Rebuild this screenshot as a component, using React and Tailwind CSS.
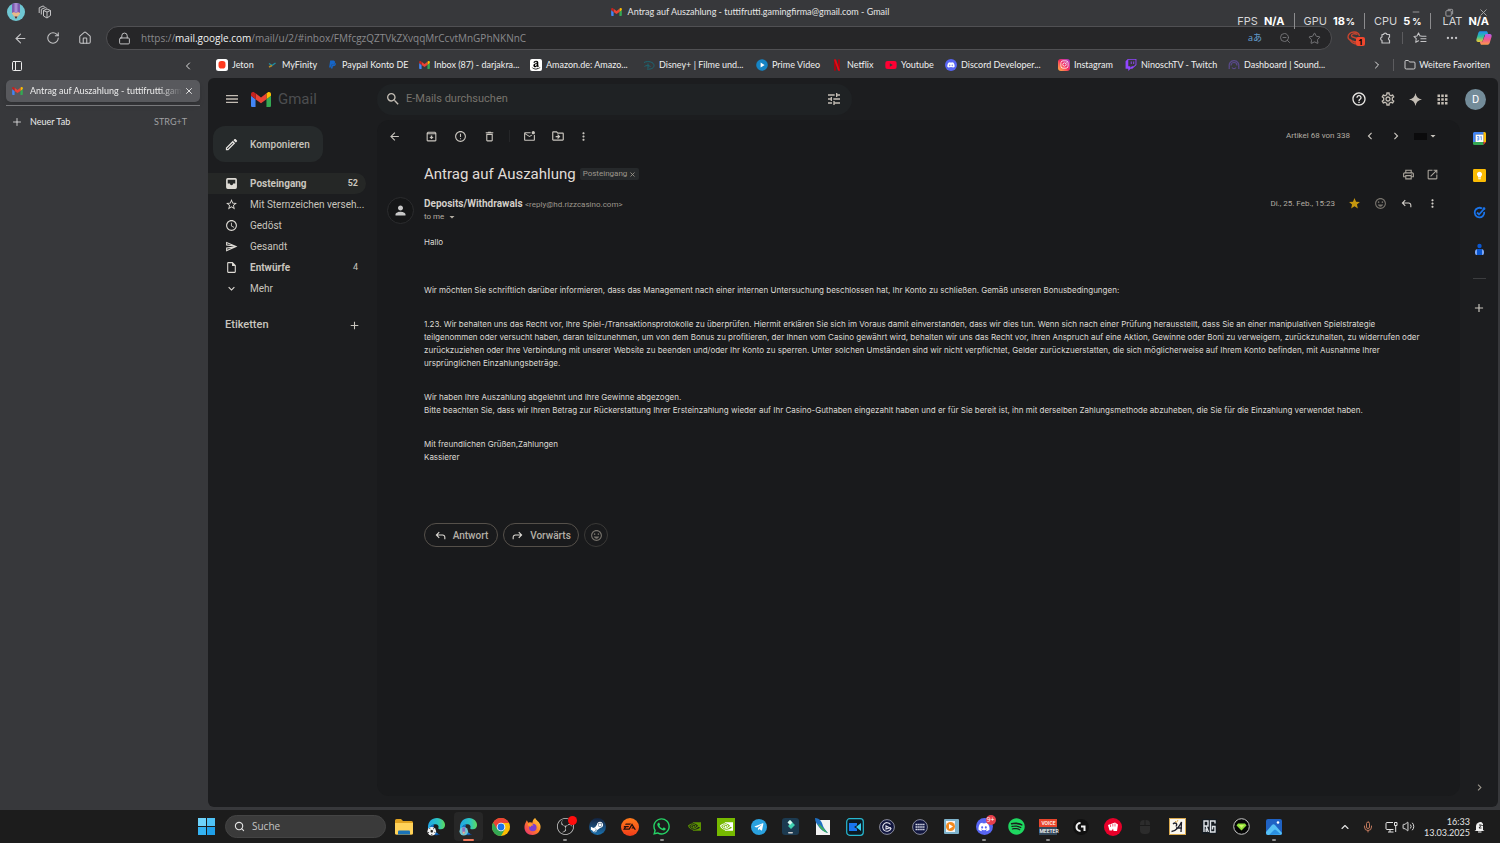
import {
  MdAccessTime, MdAdd, MdApps, MdArrowBack, MdArrowDropDown, MdChevronLeft, MdChevronRight, MdExpandMore,
  MdErrorOutline, MdHelpOutline, MdMenu, MdMoreVert, MdOpenInNew, MdOutlineArchive, MdOutlineDelete,
  MdOutlineDriveFileMove, MdOutlineInsertDriveFile, MdOutlineMarkEmailUnread, MdOutlinePrint, MdOutlineSend,
  MdOutlineSettings, MdPerson, MdSearch, MdStar, MdStarBorder, MdTune, MdOutlineEdit, MdOutlineEmojiEmotions,
} from 'react-icons/md'
import {
  FaAmazon, FaDiscord, FaInstagram, FaPaypal, FaSpotify, FaSteamSymbol, FaTelegramPlane, FaTwitch, FaWhatsapp, FaYoutube,
} from 'react-icons/fa'
import { SiEa, SiNvidia, SiObsstudio } from 'react-icons/si'
import {
  ArrowLeft, ChevronLeft, ChevronRight, ChevronUp, Ellipsis, Folder, House, Lock, Mic, Minus, PanelLeft, Plus,
  RotateCw, Search, Star, Volume2, X, ZoomOut,
} from 'lucide-react'

function GmailLogo({ className }) {
  return (
    <svg viewBox="52 42 88 66" className={className}>
      <path fill="#4285f4" d="M58 108h14V74L52 59v43c0 3.32 2.69 6 6 6" />
      <path fill="#34a853" d="M120 108h14c3.32 0 6-2.69 6-6V59l-20 15" />
      <path fill="#fbbc04" d="M120 48v26l20-15v-8c0-7.42-8.47-11.65-14.4-7.2" />
      <path fill="#ea4335" d="M72 74V48l24 18 24-18v26L96 92" />
      <path fill="#c5221f" d="M52 51v8l20 15V48l-5.6-4.2c-5.94-4.45-14.4-.22-14.4 7.2" />
    </svg>
  )
}

function ReplyIcon({ className }) {
  return (
    <svg viewBox="0 -960 960 960" fill="currentColor" className={className}>
      <path d="M760-200v-160q0-50-35-85t-85-35H273l144 144-57 56-240-240 240-240 57 56-144 144h367q83 0 141.5 58.5T840-360v160h-80Z" />
    </svg>
  )
}

function InboxIcon({ className }) {
  return (
    <svg viewBox="0 0 24 24" fill="currentColor" className={className}>
      <path fillRule="evenodd" d="M5 2h14a3 3 0 0 1 3 3v14a3 3 0 0 1-3 3H5a3 3 0 0 1-3-3V5a3 3 0 0 1 3-3zm0 3v7h4a3 3 0 0 0 6 0h4V5z" />
    </svg>
  )
}

function PuzzleIcon({ className }) {
  return (
    <svg viewBox="0 0 14 14" fill="none" stroke="currentColor" strokeWidth="1.200" strokeLinejoin="round" className={className}>
      <path d="M4 3.500h1.500a1.800 1.800 0 0 1 3.500 0h2.500v2.700a1.600 1.600 0 0 0 0 3V12H4V9.500a1.800 1.800 0 0 1 0-3.500z" />
    </svg>
  )
}

function PencilAvatar({ className }) {
  return (
    <svg viewBox="0 0 18 18" className={className}>
      <circle cx="9" cy="9" r="9" fill="#6fc7d3" />
      <path d="M5 8h8v2.500L9 16l-4-5.500z" fill="#e6b98a" />
      <path d="M5 1q4-2 8 0v9l-2-1-2 1-2-1-2 1z" fill="#7d5bb0" />
      <path d="M7.500 0h3v9L9 10 7.500 9z" fill="#a98bd0" />
      <path d="M7.500 13.500h3L9 16z" fill="#3b2f3f" />
    </svg>
  )
}

function WorkspacesIcon({ className }) {
  return (
    <svg viewBox="0 0 14 14" fill="none" stroke="#c4c4c6" strokeLinejoin="round" className={className}>
      <path d="M5.500 5.500 9 4l3.500 1.500v5L9 13l-3.500-2z" />
      <path d="M5.500 5.500 9 7l3.500-1.500M9 7v5.500M3.300 9.500V4.300L7.200 2.600l1.500.6M1.200 8V2.800L5 1l1.500.6" />
    </svg>
  )
}

function Sparkle({ className }) {
  return (
    <svg viewBox="0 0 24 24" fill="currentColor" className={className}>
      <path d="M12 0c1 7 5 11 12 12-7 1-11 5-12 12C11 17 7 13 0 12 7 11 11 7 12 0z" />
    </svg>
  )
}

function CopilotIcon({ className }) {
  return (
    <svg viewBox="0 0 18 18" className={className}>
      <defs>
        <linearGradient id="cpA" x1="0" y1="0" x2="0" y2="1">
          <stop offset="0" stopColor="#1f8df0" />
          <stop offset=".5" stopColor="#2fc0a0" />
          <stop offset="1" stopColor="#f2cb30" />
        </linearGradient>
        <linearGradient id="cpB" x1="0" y1="0" x2="0" y2="1">
          <stop offset="0" stopColor="#b45cf0" />
          <stop offset=".5" stopColor="#f0568f" />
          <stop offset="1" stopColor="#fb9a4b" />
        </linearGradient>
      </defs>
      <path d="M5 1.500h6.500c1.200 0 1.500.7 1.800 2L14 6H9.500L7.500 12c-.4 1-1 1.500-2 1.500H2.500C.8 13.500 0 12 .5 10.300L2.500 3.600C3 2.200 3.700 1.500 5 1.500z" fill="url(#cpA)" />
      <path d="M13 16.500H6.500c-1.200 0-1.500-.7-1.800-2L4.300 13h3l3-7.500C10.700 4.500 11.500 4.500 12.500 4.500h3c1.700 0 2.500 1.500 2 3.200l-2 6.700c-.5 1.400-1.200 2.100-2.500 2.100z" fill="url(#cpB)" />
    </svg>
  )
}

function JetonIcon() {
  return (
    <svg viewBox="0 0 12 12" className="size-3">
      <rect width="12" height="12" rx="2.500" fill="#fff" />
      <rect x="2.500" y="2" width="7" height="7.500" rx="2.800" fill="#ff3a1f" />
    </svg>
  )
}

function MyFinityIcon() {
  return (
    <svg viewBox="0 0 12 12" fill="none" strokeWidth="1.400" className="size-3">
      <path d="M3 4.500 6 6.500 9.500 4" stroke="#1f8fa3" />
      <path d="M3 8l3-1.500" stroke="#b98b2a" />
    </svg>
  )
}

function DisneyIcon() {
  return (
    <svg viewBox="0 0 12 12" fill="none" stroke="#1c6773" className="size-3">
      <path d="M1 3.500C5 1.500 11 3 11 6.500 11 9.500 7 10.500 4 10M5 4.500v4.500M1.500 7.500C3 6 6 6.500 7.500 7.500" />
    </svg>
  )
}

function PrimeIcon() {
  return (
    <svg viewBox="0 0 12 12" className="size-3">
      <circle cx="6" cy="6" r="5.800" fill="#1684c4" />
      <path d="M4.600 3.500v5l4-2.500z" fill="#fff" />
    </svg>
  )
}

function NetflixIcon() {
  return (
    <svg viewBox="0 0 12 12" className="size-3">
      <path d="M3 .5h2v11l-2 .3zM7 .5h2v11.300L7 11.500z" fill="#a50610" />
      <path d="M3 .5h2l4 11.300-2-.3z" fill="#e50914" />
    </svg>
  )
}

function SoundIcon() {
  return (
    <svg viewBox="0 0 12 12" fill="none" stroke="#5a4a8c" strokeWidth="1.200" className="size-3">
      <path d="M1.500 8a4.800 4.800 0 1 1 9 0M3 6.500a3 3 0 0 1 6 0M1.200 7v3M10.800 7v3" />
      <path d="M4 8.500c1 1.500 3 1.500 4 0" />
    </svg>
  )
}

function FavoritesIcon({ className }) {
  return (
    <svg viewBox="0 0 16 14" fill="none" stroke="#c4c4c6" strokeWidth="1.200" strokeLinecap="round" strokeLinejoin="round" className={className}>
      <path d="M9.500 4.800 8 4.600 6.300 1 4.500 4.700.9 5.200l2.700 2.600L3 12l3.300-1.800M10 5h5M9 8h6M9 11h6" />
    </svg>
  )
}

function RedExtension({ className }) {
  return (
    <svg viewBox="0 0 14 14" fill="none" stroke="#c9452f" strokeWidth="1.300" className={className}>
      <path d="M12.500 5C12 2.500 9.500 1 7 1 3.500 1 1 3.500 1 6c0 2 1.500 3 3.500 3.500L9 12" />
      <path d="M10.500 3.500C8 2 4 3 4.500 5S10 6 10.500 8.500 8 11 6 10M2.500 8c1.500 3 4 5 7 5" />
    </svg>
  )
}

const BOOKMARKS = [
  { name: 'Jeton', width: 'w-[50px]', icon: <JetonIcon /> },
  { name: 'MyFinity', width: 'w-[60px]', icon: <MyFinityIcon /> },
  { name: 'Paypal Konto DE', width: 'w-[92px]', icon: <FaPaypal className="size-[9px] mx-px text-[#1565c8]" /> },
  { name: 'Inbox (87) - darjakra...', width: 'w-[112px]', icon: <GmailLogo className="h-2 w-[11px]" /> },
  {
    name: 'Amazon.de: Amazo...',
    width: 'w-[113px]',
    icon: <span className="size-3 rounded-xs bg-white flex items-center justify-center"><FaAmazon className="size-[10px] text-black" /></span>,
  },
  { name: 'Disney+ | Filme und...', width: 'w-[113px]', icon: <DisneyIcon /> },
  { name: 'Prime Video', width: 'w-[75px]', icon: <PrimeIcon /> },
  { name: 'Netflix', width: 'w-[54px]', icon: <NetflixIcon /> },
  { name: 'Youtube', width: 'w-[60px]', icon: <FaYoutube className="size-3 text-[#ff0033]" /> },
  {
    name: 'Discord Developer...',
    width: 'w-[113px]',
    icon: <span className="size-3 rounded-full bg-[#5865f2] flex items-center justify-center"><FaDiscord className="size-2 text-white" /></span>,
  },
  {
    name: 'Instagram',
    width: 'w-[67px]',
    icon: <span className="size-3 rounded-[3px] bg-linear-to-tr from-[#fdb03b] via-[#f5235b] to-[#a32bd0] flex items-center justify-center"><FaInstagram className="size-[9px] text-white" /></span>,
  },
  { name: 'NinoschTV - Twitch', width: 'w-[103px]', icon: <FaTwitch className="size-3 text-[#9146ff]" /> },
  { name: 'Dashboard | Sound...', width: 'w-[103px]', icon: <SoundIcon /> },
]

const FOLDERS = [
  { name: 'Posteingang', icon: InboxIcon, count: 52, active: true, bold: true },
  { name: 'Mit Sternzeichen verseh...', icon: MdStarBorder },
  { name: 'Gedöst', icon: MdAccessTime },
  { name: 'Gesandt', icon: MdOutlineSend },
  { name: 'Entwürfe', icon: MdOutlineInsertDriveFile, count: 4, bold: true },
  { name: 'Mehr', icon: MdExpandMore },
]

function TitleBar() {
  return (
    <div className="relative h-6 flex items-center justify-center">
      <div className="absolute left-[7px] inset-y-0 flex items-center gap-[13px]">
        <button aria-label="Profil"><PencilAvatar className="size-[18px]" /></button>
        <button aria-label="Arbeitsbereiche"><WorkspacesIcon className="size-[14px]" /></button>
      </div>
      <GmailLogo className="w-[11px] h-2 mr-1.5" />
      <span className="font-['Lato',sans-serif] text-[9px] text-[#e6e6e6]">Antrag auf Auszahlung - tuttifrutti.gamingfirma@gmail.com - Gmail</span>
      <div className="absolute right-[11px] inset-y-0 flex items-center gap-6 text-[#a8a8aa]">
        <button aria-label="Minimieren"><Minus className="size-[10px]" strokeWidth={2} /></button>
        <button aria-label="Wiederherstellen">
          <svg viewBox="0 0 10 10" fill="none" stroke="currentColor" className="size-[9px]">
            <rect x="1" y="3" width="6" height="6" rx="1" />
            <path d="M3 1.500h4.500a1 1 0 0 1 1 1V7" />
          </svg>
        </button>
        <button aria-label="Schließen"><X className="size-[11px]" strokeWidth={2} /></button>
      </div>
      <PerfOverlay />
    </div>
  )
}

function PerfOverlay() {
  const bar = <span className="w-px h-4 bg-[#8c8c8e]" />
  return (
    <div className="absolute z-10 right-[11px] top-3 h-[18px] flex items-center gap-[9px] font-['Inter',sans-serif] text-[11px] text-[#d6d6d8]">
      <span className="flex items-center gap-1.5">FPS <b className="text-white">N/A</b></span>
      {bar}
      <span className="flex items-center gap-1.5">GPU <b className="text-white">18<span className="text-[9px] ml-px">%</span></b></span>
      {bar}
      <span className="flex items-center gap-1.5">CPU <b className="text-white">5<span className="text-[9px] ml-0.5">%</span></b></span>
      {bar}
      <span className="flex items-center gap-1.5 ml-0.5">LAT <b className="text-white">N/A</b></span>
    </div>
  )
}

function AddressBar() {
  return (
    <div className="h-[28px] flex items-center text-[#c4c4c6]">
      <div className="flex items-center gap-[18px] pl-[13px] w-[106px]">
        <button aria-label="Zurück"><ArrowLeft className="size-[15px]" strokeWidth={1.7} /></button>
        <button aria-label="Aktualisieren"><RotateCw className="size-[14px]" strokeWidth={1.8} /></button>
        <button aria-label="Startseite"><House className="size-[14px]" strokeWidth={1.8} /></button>
      </div>
      <div className="flex-1 h-6 flex items-center rounded-full border border-[#505053] bg-[#262628] pl-[11px] pr-2.5">
        <Lock className="size-[13px] mr-2.5" strokeWidth={1.8} />
        <p className="flex-1 text-[10px] text-[#8a8a8d]">
          https://<span className="text-[#f2f2f2]">mail.google.com</span>/mail/u/2/#inbox/FMfcgzQZTVkZXvqqMrCcvtMnGPhNKNnC
        </p>
        <div className="flex items-center gap-[17px] text-[#77777a]">
          <button aria-label="Übersetzen" className="text-[9px] leading-3 text-[#68a4d8] font-['Open_Sans','Noto_Sans_CJK_JP',sans-serif]">aあ</button>
          <button aria-label="Zoom"><ZoomOut className="size-3" strokeWidth={1.8} /></button>
          <button aria-label="Favorit"><Star className="size-[13px]" strokeWidth={1.8} /></button>
        </div>
      </div>
      <div className="w-[168px] flex items-center pl-[15px]">
        <button aria-label="Erweiterung" className="relative">
          <RedExtension className="size-[14px]" />
          <span className="absolute -right-1 top-1.5 size-[9px] rounded-xs bg-[#f0472d] text-[8px] leading-[9px] font-bold text-black">1</span>
        </button>
        <button aria-label="Erweiterungen" className="ml-[17px]"><PuzzleIcon className="size-[14px]" /></button>
        <span className="w-px h-3 mx-[10px] bg-[#5c5c5f]" />
        <button aria-label="Favoriten"><FavoritesIcon className="w-[14px] h-3" /></button>
        <button aria-label="Einstellungen und mehr" className="ml-[18px]"><Ellipsis className="size-[14px]" /></button>
        <button aria-label="Copilot" className="ml-[17px]"><CopilotIcon className="size-4" /></button>
      </div>
    </div>
  )
}

function VerticalTabs() {
  return (
    <aside className="w-[208px] shrink-0 font-['Lato',sans-serif] text-[9px] text-[#ececec]">
      <div className="h-[26px] flex items-center justify-between pl-[11px] pr-[14px] pt-0.5">
        <button aria-label="Tab-Menü"><PanelLeft className="size-3" strokeWidth={2} /></button>
        <button aria-label="Bereich reduzieren"><ChevronLeft className="size-3" strokeWidth={1.8} /></button>
      </div>
      <div className="ml-1.5 mr-2 mt-0.5 h-[22px] rounded-[5px] bg-[#58595d] shadow-md flex items-center px-1.5 gap-0.5">
        <GmailLogo className="w-[11px] h-2 shrink-0 mr-[5px]" />
        <span className="flex-1 whitespace-nowrap mask-r-from-85%">Antrag auf Auszahlung - tuttifrutti.gam</span>
        <button aria-label="Tab schließen"><X className="size-[10px]" strokeWidth={2.2} /></button>
      </div>
      <div className="ml-1.5 mr-2 mt-[3px] border-t border-[#77787b]" />
      <button className="w-full h-8 flex items-center pl-[11px] pr-[21px]">
        <Plus className="size-3" strokeWidth={1.6} />
        <span className="ml-[7px] flex-1 text-left">Neuer Tab</span>
        <span className="text-[#a0a0a3]">STRG+T</span>
      </button>
    </aside>
  )
}

function BookmarksBar() {
  return (
    <div className="h-[26px] pb-px flex items-center pl-2 pr-[10px] font-['Lato',sans-serif] text-[9px] text-[#f0f0f0] whitespace-nowrap">
      {BOOKMARKS.map((b) => (
        <a key={b.name} href="#" className={`${b.width} shrink-0 flex items-center gap-1`}>
          <span className="w-3 shrink-0 flex justify-center">{b.icon}</span>
          {b.name}
        </a>
      ))}
      <div className="ml-auto flex items-center">
        <button aria-label="Weitere anzeigen"><ChevronRight className="size-3" strokeWidth={1.8} /></button>
        <span className="w-px h-3 bg-[#5c5c5f] mx-2.5" />
        <button className="flex items-center gap-[3px]">
          <Folder className="size-3" strokeWidth={1.6} />
          Weitere Favoriten
        </button>
      </div>
    </div>
  )
}

function MailHeader() {
  return (
    <header className="h-[42px] flex items-center text-[#c3bdb4]">
      <div className="w-[169px] shrink-0 flex items-center pl-4">
        <button aria-label="Hauptmenü"><MdMenu className="size-4" /></button>
        <GmailLogo className="w-5 h-[15px] ml-[11px]" />
        <span className="ml-[7px] text-[15px] text-[#4c4e50]">Gmail</span>
      </div>
      <label className="w-[475px] h-[31px] rounded-full bg-[#1f2224] flex items-center pl-2 pr-2.5">
        <MdSearch className="size-4 shrink-0" />
        <input type="text" aria-label="E-Mails durchsuchen" placeholder="E-Mails durchsuchen" className="flex-1 ml-[5px] bg-transparent outline-none text-[11px] placeholder:text-[#77736c]" />
        <button aria-label="Suchoptionen"><MdTune className="size-4" /></button>
      </label>
      <div className="ml-auto flex items-center gap-[13px] pr-3">
        <button aria-label="Support" className="text-[#e8e6e3]"><MdHelpOutline className="size-4" /></button>
        <button aria-label="Einstellungen"><MdOutlineSettings className="size-4" /></button>
        <button aria-label="Gemini"><Sparkle className="size-[13px]" /></button>
        <button aria-label="Google Apps"><MdApps className="size-[15px]" /></button>
        <button aria-label="Konto" className="ml-0.5 size-[21px] rounded-full bg-[#738c99] text-[11px] leading-[21px] text-white">D</button>
      </div>
    </header>
  )
}

function MailNav() {
  return (
    <nav className="w-[169px] shrink-0 text-[#c9c5be] text-[10px]">
      <button className="mt-1.5 ml-[5px] w-[110px] h-9 rounded-xl bg-[#262a2b] flex items-center pl-[11px] gap-[11px] font-medium">
        <MdOutlineEdit className="size-[15px] text-[#e8e6e3]" />
        Komponieren
      </button>
      <ul className="mt-[11px]">
        {FOLDERS.map((f) => (
          <li key={f.name}>
            <a href="#" className={`mr-[11px] h-[21px] rounded-r-full flex items-center pl-[17px] pr-2 whitespace-nowrap ${f.active ? 'bg-[#252726]' : ''} ${f.bold ? 'font-bold' : ''}`}>
              <f.icon className="size-[13px] shrink-0 text-[#dedbd5]" />
              <span className="ml-3 flex-1">{f.name}</span>
              {f.count && <span className={`text-[9px] ${f.active ? 'font-bold' : 'font-normal'}`}>{f.count}</span>}
            </a>
          </li>
        ))}
      </ul>
      <div className="mt-[17px] pl-[17px] pr-4 h-[18px] flex items-center justify-between">
        <h2 className="text-[11px] font-medium">Etiketten</h2>
        <button aria-label="Label erstellen"><MdAdd className="size-[13px]" /></button>
      </div>
    </nav>
  )
}

function Toolbar() {
  return (
    <div className="h-8 flex items-center pl-[11px] pr-[21px] text-[#c9c5be]">
      <button aria-label="Zurück" className="mr-6"><MdArrowBack className="size-[13px]" /></button>
      <div className="flex items-center gap-4">
        <button aria-label="Archivieren"><MdOutlineArchive className="size-[13px]" /></button>
        <button aria-label="Spam melden"><MdErrorOutline className="size-[13px]" /></button>
        <button aria-label="Löschen"><MdOutlineDelete className="size-[13px]" /></button>
      </div>
      <span className="w-px h-3 bg-[#252628] mx-[13px]" />
      <div className="flex items-center gap-[15px]">
        <button aria-label="Als ungelesen markieren"><MdOutlineMarkEmailUnread className="size-[13px]" /></button>
        <button aria-label="Verschieben"><MdOutlineDriveFileMove className="size-[14px]" /></button>
        <button aria-label="Mehr" className="-ml-[3px]"><MdMoreVert className="size-[13px]" /></button>
      </div>
      <span className="ml-auto text-[8px] text-[#b3ada3]">Artikel 68 von 338</span>
      <button aria-label="Neuer" className="ml-[13px]"><MdChevronLeft className="size-[14px]" /></button>
      <button aria-label="Älter" className="ml-3"><MdChevronRight className="size-[14px]" /></button>
      <button aria-label="Eingabetool" className="ml-[11px] flex items-center">
        <span className="w-[13px] h-[7px] bg-[#0b0b0c]" />
        <MdArrowDropDown className="size-3" />
      </button>
    </div>
  )
}

function Message() {
  return (
    <article className="pl-[47px] pr-[21px] text-[#d3cfc9]">
      <div className="h-11 flex items-center">
        <h1 className="text-[15px] text-[#e0ddd8]">Antrag auf Auszahlung</h1>
        <span className="ml-1 h-3 px-[3px] rounded-xs bg-[#26292b] text-[8px] text-[#9d978d] flex items-center gap-0.5">
          Posteingang <X className="size-[7px]" strokeWidth={3} />
        </span>
        <div className="ml-auto flex items-center gap-[11px] text-[#a9a49b]">
          <button aria-label="Alle drucken"><MdOutlinePrint className="size-[13px]" /></button>
          <button aria-label="In neuem Fenster"><MdOpenInNew className="size-[13px]" /></button>
        </div>
      </div>

      <div className="-ml-[37px] flex items-start">
        <span className="mt-px size-[27px] shrink-0 rounded-full border border-[#2b2c2e] bg-[#151617] flex items-center justify-center">
          <MdPerson className="size-[15px] text-[#c8c8c8]" />
        </span>
        <div className="ml-2.5 mt-0.5">
          <p className="text-[10px] leading-3 font-bold">
            Deposits/Withdrawals <span className="text-[8px] font-normal text-[#9d978d]">&lt;reply@hd.rizzcasino.com&gt;</span>
          </p>
          <button className="flex items-center gap-0.5 text-[8px] leading-3 text-[#b3ada3]">
            to me <MdArrowDropDown className="size-3" />
          </button>
        </div>
        <div className="ml-auto h-[15px] flex items-center gap-[13px]">
          <time className="text-[8px] text-[#b3ada3]">Di., 25. Feb., 15:23</time>
          <button aria-label="Markiert" className="text-[#c4960f]"><MdStar className="size-[13px]" /></button>
          <button aria-label="Reaktion" className="text-[#77736c]"><MdOutlineEmojiEmotions className="size-[13px]" /></button>
          <button aria-label="Antworten"><ReplyIcon className="size-[13px]" /></button>
          <button aria-label="Mehr"><MdMoreVert className="size-[13px]" /></button>
        </div>
      </div>

      <div className="mt-3 -mr-3 font-['Inter',Arial,sans-serif] text-[8px] leading-[13px] text-[#dedad4]">
        <p>Hallo</p>
        <p className="mt-[35px]">
          Wir möchten Sie schriftlich darüber informieren, dass das Management nach einer internen Untersuchung beschlossen hat, Ihr Konto zu schließen. Gemäß unseren Bonusbedingungen:
        </p>
        <p className="mt-[21px]">
          1.23. Wir behalten uns das Recht vor, Ihre Spiel-/Transaktionsprotokolle zu überprüfen. Hiermit erklären Sie sich im Voraus damit einverstanden, dass wir dies tun. Wenn sich nach einer Prüfung herausstellt, dass Sie an einer manipulativen Spielstrategie<br />
          teilgenommen oder versucht haben, daran teilzunehmen, um von dem Bonus zu profitieren, der Ihnen vom Casino gewährt wird, behalten wir uns das Recht vor, Ihren Anspruch auf eine Aktion, Gewinne oder Boni zu verweigern, zurückzuhalten, zu widerrufen oder<br />
          zurückzuziehen oder Ihre Verbindung mit unserer Website zu beenden und/oder Ihr Konto zu sperren. Unter solchen Umständen sind wir nicht verpflichtet, Gelder zurückzuerstatten, die sich möglicherweise auf Ihrem Konto befinden, mit Ausnahme Ihrer<br />
          ursprünglichen Einzahlungsbeträge.
        </p>
        <p className="mt-[21px]">
          Wir haben Ihre Auszahlung abgelehnt und Ihre Gewinne abgezogen.<br />
          Bitte beachten Sie, dass wir Ihren Betrag zur Rückerstattung Ihrer Ersteinzahlung wieder auf Ihr Casino-Guthaben eingezahlt haben und er für Sie bereit ist, ihn mit derselben Zahlungsmethode abzuheben, die Sie für die Einzahlung verwendet haben.
        </p>
        <p className="mt-[21px]">
          Mit freundlichen Grüßen,Zahlungen<br />
          Kassierer
        </p>
      </div>

      <div className="mt-[59px] flex gap-[5px] text-[10px] font-medium text-[#b5b0a7]">
        <button className="h-6 w-[74px] rounded-full border border-[#55504a] flex items-center justify-center gap-1.5">
          <ReplyIcon className="size-[13px] text-[#dedbd5]" />Antwort
        </button>
        <button className="h-6 w-[76px] rounded-full border border-[#55504a] flex items-center justify-center gap-1.5">
          <ReplyIcon className="size-[13px] -scale-x-100 text-[#dedbd5]" />Vorwärts
        </button>
        <button aria-label="Reaktion" className="size-6 rounded-full border border-[#3a3937] flex items-center justify-center">
          <MdOutlineEmojiEmotions className="size-[13px] text-[#77736c]" />
        </button>
      </div>
    </article>
  )
}

function SidePanel() {
  return (
    <aside className="w-[38px] shrink-0 flex flex-col items-center pt-3 pb-[13px] text-[#c9c5be]">
      <div className="flex flex-col gap-6">
        <button aria-label="Kalender">
          <svg viewBox="0 0 13 13" className="size-[13px]">
            <path d="M0 1.500Q0 0 1.500 0H11v2.500H2.500V10H0z" fill="#4285f4" />
            <path d="M10.500 0h1Q13 0 13 1.500V10h-2.500z" fill="#fbbc04" />
            <path d="M0 10h10.500v3h-9Q0 13 0 11.500z" fill="#34a853" />
            <path d="M10.500 10H13l-2.500 3z" fill="#ea4335" />
            <path d="M2.500 2.500h8V10h-8z" fill="#fff" />
            <path d="M4 4.500h1.800v3.500H4M4.300 6.200h1.300M7.300 5l1-.6V8.200" stroke="#4285f4" strokeWidth=".8" fill="none" />
          </svg>
        </button>
        <button aria-label="Notizen">
          <svg viewBox="0 0 13 13" className="size-[13px]">
            <rect width="13" height="13" rx="1.200" fill="#fbbc04" />
            <path d="M6.500 2.800a2.600 2.600 0 0 1 1.500 4.700v1H5v-1a2.600 2.600 0 0 1 1.500-4.700zM5.200 9.200h2.600v1H5.200z" fill="#fff" />
          </svg>
        </button>
        <button aria-label="Aufgaben">
          <svg viewBox="0 0 13 13" fill="none" className="size-[13px]">
            <path d="M9 2.500a4.800 4.800 0 1 0 2.200 3.300" stroke="#1a73e8" strokeWidth="1.800" />
            <path d="m4 6.500 2 2 4.500-5" stroke="#1a73e8" strokeWidth="1.800" />
            <circle cx="11" cy="2.700" r="1.400" fill="#1a73e8" />
          </svg>
        </button>
        <button aria-label="Kontakte">
          <svg viewBox="0 0 13 13" className="size-[13px]">
            <circle cx="6.500" cy="3" r="2.200" fill="#0b57d0" />
            <path d="M2 9q0-3 3-3h3q3 0 3 3v1q0 2-1.500 2h-6Q2 12 2 10z" fill="#7da7f5" />
            <path d="M4 6h5v6H4z" fill="#0b57d0" />
          </svg>
        </button>
      </div>
      <span className="mt-[22px] w-[13px] h-px bg-[#3c3d3f]" />
      <button aria-label="Add-ons" className="mt-[22px]"><MdAdd className="size-[14px]" /></button>
      <button aria-label="Seitenleiste ausblenden" className="mt-auto"><MdChevronRight className="size-[13px] text-[#9d978d]" /></button>
    </aside>
  )
}

function EdgeIcon({ id, children }) {
  return (
    <svg viewBox="0 0 20 20" className="size-[19px]">
      <defs>
        <linearGradient id={id} x1="0" y1="0" x2="1" y2="0">
          <stop offset="0" stopColor="#1fa6e8" />
          <stop offset=".6" stopColor="#2cc6c0" />
          <stop offset="1" stopColor="#5fdc5a" />
        </linearGradient>
      </defs>
      <path d="M1 11a9 9 0 0 0 13 7.200c-5 .3-7.500-3-6.500-6.200z" fill="#0d4f9f" />
      <path d="M1 11C1 5 5 1 10.500 1 16 1 19 5 19 8.500c0 3-2 4.500-4.500 4.500-2 0-3-.8-2.500-1.800.8-1.600-.5-3.700-3-3.700C5 7.500 2.500 10 3 15 1.500 13.500 1 12 1 11z" fill={`url(#${id})`} />
      <path d="M3 15C2.500 10 5 7.500 8 7.600 6 9 6 15 12 17.500c-3 1.500-7 .5-9-2.500z" fill="#1573c8" />
      {children}
    </svg>
  )
}

const TASKS = [
  {
    name: 'Explorer',
    icon: (
      <svg viewBox="0 0 18 16" className="w-[18px] h-4">
        <path d="M0 1.500Q0 0 1.500 0H6l2 2h8.500Q18 2 18 3.500V14q0 1.500-1.500 1.500h-15Q0 15.500 0 14z" fill="#e0a220" />
        <path d="M0 4h18v10q0 1.500-1.500 1.500h-15Q0 15.500 0 14z" fill="#ffd25a" />
        <path d="M3 15.500v-3q0-1 1-1h10q1 0 1 1v3z" fill="#1a73b8" />
      </svg>
    ),
  },
  {
    name: 'Edge Fußball',
    icon: (
      <EdgeIcon id="edgeA">
        <circle cx="5" cy="15" r="4.500" fill="#f4f4f4" />
        <path d="m5 13.400 1.500 1.200-.6 1.800H4.100l-.6-1.800z" fill="#222" />
        <path d="m2.500 12 1 .5M7.500 12l-1 .5M1.200 16.500l1-.3M8.800 16.500l-1-.3M5 19v-1" stroke="#222" />
      </EdgeIcon>
    ),
  },
  {
    name: 'Edge',
    active: true,
    icon: (
      <EdgeIcon id="edgeB">
        <circle cx="5" cy="15" r="4.500" fill="#6fc7d3" />
        <path d="M3.500 11h3v5L5 18.500 3.500 16z" fill="#8f6cc0" />
        <path d="M3.500 15.500h3L5 18.500z" fill="#e6b98a" />
      </EdgeIcon>
    ),
  },
  {
    name: 'Chrome',
    icon: (
      <svg viewBox="0 0 18 18" className="size-[18px]">
        <circle cx="9" cy="9" r="9" fill="#fbbc04" />
        <path d="M1.200 4.500A9 9 0 0 0 9 18l3.900-6.800L9 9z" fill="#34a853" />
        <path d="M9 5h7.900L16.800 4.500A9 9 0 0 0 1.200 4.500L5.100 11z" fill="#ea4335" />
        <circle cx="9" cy="9" r="4.300" fill="#fff" />
        <circle cx="9" cy="9" r="3.400" fill="#1a73e8" />
      </svg>
    ),
  },
  {
    name: 'Firefox',
    icon: (
      <svg viewBox="0 0 18 18" className="size-[17px]">
        <defs>
          <linearGradient id="fox" x1="1" y1="0" x2="0" y2="1">
            <stop offset="0" stopColor="#ffdc3c" />
            <stop offset=".5" stopColor="#ff7a26" />
            <stop offset="1" stopColor="#e5247f" />
          </linearGradient>
        </defs>
        <path d="M3 2.500 4.500 5C7 4 8 5 9 5c0-2 1-4 3-5 0 2 5 4 5.500 8.500C18 14 14 18 9 18S0 14.500.5 9C.6 6.500 2 5 3 2.500z" fill="url(#fox)" />
        <circle cx="9.300" cy="10" r="4" fill="#7b3fd0" />
        <path d="M4 6c3-1 5 0 6 2-2-.3-3 .5-3 1.500-1.500-.5-3-1.500-3-3.500z" fill="#ff9a2a" />
      </svg>
    ),
  },
  {
    name: 'OBS Studio',
    running: true,
    icon: (
      <span className="relative">
        <SiObsstudio className="size-[17px] text-[#c8c8c8]" />
        <span className="absolute -top-0.5 -right-[3px] size-[9px] rounded-full bg-[#ff0d0d]" />
      </span>
    ),
  },
  {
    name: 'Steam',
    icon: <span className="size-[17px] rounded-full bg-linear-to-b from-[#12233f] to-[#1872b0] flex items-center justify-center"><FaSteamSymbol className="size-[14px] text-white" /></span>,
  },
  {
    name: 'EA',
    icon: <span className="size-[18px] rounded-full bg-linear-to-b from-[#ff7a1a] to-[#f03a1a] flex items-center justify-center"><SiEa className="size-[13px] text-[#24100c]" /></span>,
  },
  { name: 'WhatsApp', running: true, icon: <FaWhatsapp className="size-[19px] text-[#25d366]" /> },
  { name: 'GeForce', icon: <SiNvidia className="size-[13px] text-[#5c9400]" /> },
  { name: 'Nvidia App', icon: <span className="size-[18px] bg-[#76b900] flex items-center justify-center"><SiNvidia className="size-[13px] text-white" /></span> },
  {
    name: 'Telegram',
    icon: <span className="size-4 rounded-full bg-[#2aa1de] flex items-center justify-center"><FaTelegramPlane className="size-[10px] text-white" /></span>,
  },
  {
    name: 'Filmora',
    icon: (
      <svg viewBox="0 0 17 17" className="size-[17px]">
        <rect width="17" height="17" rx="3" fill="#1c3a50" />
        <path d="m8 2 5 5-4 4-3-3 2-2-2-2z" fill="#3fd0b0" />
        <path d="m8 2 2.500 2.500L8 7 5.500 4.500z" fill="#d8f5ee" />
        <rect x="6" y="14" width="5" height="1.600" rx=".8" fill="#ccc" />
      </svg>
    ),
  },
  {
    name: 'Feder',
    icon: (
      <svg viewBox="0 0 17 17" className="size-[17px]">
        <path d="M2 2h14v15H2z" fill="#f2f2f2" />
        <path d="M1 0c5 0 7 4 8 8 1 2 3 5 5 7-4-1-7-3-9-6S1 4 1 0z" fill="#1f6fc0" />
        <path d="M4 6c2 0 5 4 10 9-4-1-8-4-10-9z" fill="#3fae5a" />
      </svg>
    ),
  },
  {
    name: 'PowerDirector',
    icon: (
      <svg viewBox="0 0 18 18" className="size-[18px]">
        <rect x=".7" y=".7" width="16.600" height="16.600" rx="3" fill="#0c1a22" stroke="#28b8d0" strokeWidth="1.200" />
        <path d="M3 5h8v8H3z" fill="#1976f0" />
        <path d="m15 5-7 4 7 4z" fill="#0c1a22" />
        <path d="m15 5-5 4 5 4z" fill="#3ad0f0" />
      </svg>
    ),
  },
  {
    name: 'Elgato',
    icon: (
      <svg viewBox="0 0 16 16" fill="none" className="size-4">
        <circle cx="8" cy="8" r="7.400" fill="#11163f" stroke="#8a8c9c" />
        <path d="M11.500 5.500a4.300 4.300 0 1 0 .5 4L7 7v3l5-1.500" stroke="#e0e0ea" strokeWidth="1.100" />
      </svg>
    ),
  },
  {
    name: 'Stream Deck',
    icon: (
      <svg viewBox="0 0 16 16" fill="none" className="size-4">
        <circle cx="8" cy="8" r="7.400" fill="#11163f" stroke="#8a8c9c" />
        <path d="M3.500 5.500h9M3.500 8h9M3.500 10.500h9" stroke="#d8dae8" strokeWidth="1.500" strokeDasharray="1.500 .4" />
      </svg>
    ),
  },
  {
    name: 'Media Player',
    icon: (
      <svg viewBox="0 0 15 15" className="size-[15px]">
        <rect width="15" height="15" rx="1" fill="#7eb3cc" />
        <path d="M2 2h9v11H2z" fill="#f4f4f4" />
        <circle cx="6.500" cy="7.500" r="4.500" fill="#f28a1e" />
        <path d="M5 5v5l4-2.500z" fill="#fff" />
      </svg>
    ),
  },
  {
    name: 'Discord',
    running: true,
    icon: (
      <span className="relative size-[17px] rounded-full bg-[#5865f2] flex items-center justify-center">
        <FaDiscord className="size-3 text-white" />
        <span className="absolute -top-[3px] -right-[3px] size-[10px] rounded-full bg-[#e8404c] text-[7px] leading-[10px] text-white">9+</span>
      </span>
    ),
  },
  { name: 'Spotify', icon: <FaSpotify className="size-[17px] text-[#1ed760]" /> },
  {
    name: 'Voicemeeter',
    running: true,
    icon: (
      <span className="w-[18px] flex flex-col font-['Roboto',sans-serif] font-medium text-[5px] leading-[8px] text-white">
        <span className="bg-[#e8452c]">VOICE</span>
        <span className="bg-[#34485a]">MEETER</span>
      </span>
    ),
  },
  {
    name: 'Logitech G Hub',
    icon: (
      <svg viewBox="0 0 16 16" fill="none" className="size-4">
        <circle cx="8" cy="8" r="8" fill="#111" />
        <path d="M7.500 4a4 4 0 1 0 0 8M8 7.500h3.500V12" stroke="#f2f2f2" strokeWidth="2" />
      </svg>
    ),
  },
  {
    name: 'Riot',
    icon: (
      <svg viewBox="0 0 18 18" className="size-[18px]">
        <circle cx="9" cy="9" r="9" fill="#e8002a" />
        <path d="m4 7 7-2.500L14 6.500 13 13H9.500L9 10.500 8 12.500H5.500z" fill="#fff" />
        <path d="M6.500 6.500v2.500M8.800 6v2.500M11 5.500v3" stroke="#e8002a" strokeWidth=".6" />
      </svg>
    ),
  },
  {
    name: 'Maus',
    icon: (
      <svg viewBox="0 0 10 14" className="w-[10px] h-[14px]">
        <rect width="10" height="14" rx="4" fill="#2c2c2c" />
        <path d="M5 0v5M0 5.500h10" stroke="#1a1a1a" />
      </svg>
    ),
  },
  {
    name: 'Schriften',
    icon: (
      <svg viewBox="0 0 17 17" fill="none" className="size-[17px]">
        <rect x=".5" y=".5" width="16" height="16" fill="#faf6ee" stroke="#d9a94e" />
        <path d="M2.500 13.500c4 0 8-5 10-9.500L12 14M7 10h6M4 6c2-2 5-.5 3 2.500" stroke="#1d1d2a" strokeWidth="1.300" />
        <path d="m6 3 1.500 1.500L9 2" stroke="#d9a94e" />
      </svg>
    ),
  },
  {
    name: 'Rockstar',
    icon: (
      <svg viewBox="0 0 15 15" fill="none" stroke="#dfe3e8" strokeWidth="1.400" className="size-[15px]">
        <rect width="15" height="15" fill="#141a20" stroke="none" />
        <path d="M2 13V2h4v5H2.500M4 7l2.500 6M4.200 9.500V13M13 4.500V2H8.500v11H13V7.500h-2.500v3" />
      </svg>
    ),
  },
  {
    name: 'GameFirst',
    icon: (
      <svg viewBox="0 0 17 17" className="size-[17px]">
        <circle cx="8.500" cy="8.500" r="7.800" fill="#050505" stroke="#c8c8c8" />
        <path d="M5 5.500h7l1.500 2-5 5-5-5z" fill="#8fe03a" />
        <path d="M6 7h5L8.500 10z" fill="#d0f56a" />
      </svg>
    ),
  },
  {
    name: 'Fotos',
    running: true,
    icon: (
      <svg viewBox="0 0 16 16" className="size-4">
        <rect width="16" height="16" rx="2" fill="#1f62c4" />
        <path d="m0 13 6-7q1.500-1.500 3 0l7 8v0q0 2-2 2H2q-2 0-2-2z" fill="#56c0f5" />
        <path d="m3 16 5-5q1-1 2 0l5 4.500z" fill="#2a8fe0" />
        <circle cx="12" cy="3.500" r="1.300" fill="#fff" />
      </svg>
    ),
  },
]

function Taskbar() {
  return (
    <footer className="h-[33px] bg-[#1c1c1c] flex items-center pl-[198px] pr-3.5 text-[#e4e4e4]">
      <button aria-label="Start" className="grid grid-cols-2 gap-px size-[17px]">
        <span className="bg-[#6fd3fb]" />
        <span className="bg-[#4fc3f7]" />
        <span className="bg-[#35b3f2]" />
        <span className="bg-[#1f9fe8]" />
      </button>
      <label className="ml-2.5 w-[161px] h-[23px] rounded-full bg-[#3a3a3a] border border-[#444] flex items-center pl-2">
        <Search className="size-[11px] shrink-0" strokeWidth={2.4} />
        <input type="text" aria-label="Suche" placeholder="Suche" className="w-full ml-[7px] bg-transparent outline-none text-[10px] placeholder:text-[#c4c4c4]" />
      </label>
      <div className="ml-0.5 w-[902px] h-full flex items-center">
        {TASKS.map((t) => (
          <button key={t.name} aria-label={t.name} className="relative flex-1 h-full flex items-center justify-center">
            {t.active && <span className="absolute inset-x-0.5 inset-y-0.5 rounded bg-[#272727]" />}
            <span className="relative flex items-center justify-center">{t.icon}</span>
            {t.active && <span className="absolute bottom-0.5 w-[11px] h-0.5 rounded-full bg-[#f27a5e]" />}
            {t.running && <span className="absolute bottom-0.5 w-1 h-0.5 rounded-full bg-[#8e8e8e]" />}
          </button>
        ))}
      </div>
      <div className="ml-auto flex items-center">
        <button aria-label="Ausgeblendete Symbole"><ChevronUp className="size-3" strokeWidth={2.2} /></button>
        <Mic className="size-3 ml-[11px] text-[#c0785c]" strokeWidth={2} />
        <svg viewBox="0 0 13 12" fill="none" stroke="currentColor" className="w-[13px] h-3 ml-[11px]">
          <path d="M8 1.500H2q-1 0-1 1v5q0 1 1 1h6.500M5 8.500v2.500M3 11h5.500M9.500 1.500h2.500v3H9.500zM10.700 4.500V11" />
        </svg>
        <Volume2 className="size-[13px] ml-1" strokeWidth={1.8} />
        <div className="w-[55px] text-right font-['Lato',sans-serif] text-[9px] leading-[11px]">
          <p>16:33</p>
          <p>13.03.2025</p>
        </div>
        <svg viewBox="0 0 12 12" className="size-3 ml-1">
          <path d="M2 9V5a4 4 0 0 1 7-2.500V9l1.500 1H.5zM4 10.500h3.500v1H4z" fill="#f0f0f0" />
          <path d="M5 4h2.500L5 7h2.500M8.500 2h2.500L8.500 4.500H11" stroke="#1c1c1c" strokeWidth=".9" fill="none" />
        </svg>
      </div>
    </footer>
  )
}

export default function App() {
  return (
    <div className="min-h-screen flex flex-col bg-[#37383b] font-['Open_Sans','Noto_Sans',sans-serif]">
      <TitleBar />
      <AddressBar />
      <div className="flex-1 flex">
        <VerticalTabs />
        <div className="flex-1 min-w-0 flex flex-col">
          <BookmarksBar />
          <main className="flex-1 mr-0.5 mb-[3px] rounded-md bg-[#1c1d1f] flex flex-col font-['Roboto',sans-serif]">
            <MailHeader />
            <div className="flex-1 flex">
              <MailNav />
              <section className="flex-1 min-w-0 mb-[11px] rounded-xl bg-[#191a1c]">
                <Toolbar />
                <Message />
              </section>
              <SidePanel />
            </div>
          </main>
        </div>
      </div>
      <Taskbar />
    </div>
  )
}
